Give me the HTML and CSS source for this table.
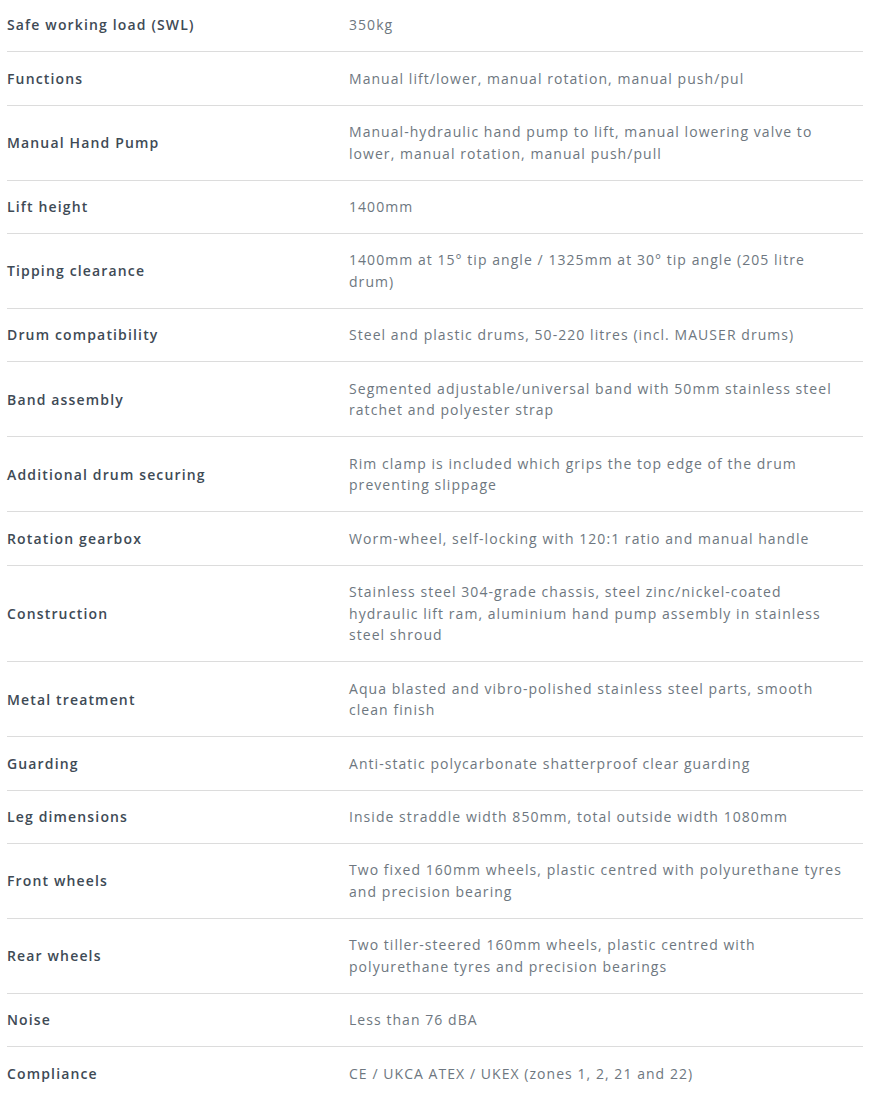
FILE: index.html
```html
<!DOCTYPE html>
<html lang="en">
<head>
<meta charset="utf-8">
<title>Specifications</title>
<link rel="stylesheet" href="styles.css">
</head>
<body>
<div class="specs">
  <div class="row"><div class="label">Safe working load (SWL)</div><div class="value">350kg</div></div>
  <div class="row"><div class="label">Functions</div><div class="value">Manual lift/lower, manual rotation, manual push/pul</div></div>
  <div class="row"><div class="label">Manual Hand Pump</div><div class="value">Manual-hydraulic hand pump to lift, manual lowering valve to lower, manual rotation, manual push/pull</div></div>
  <div class="row"><div class="label">Lift height</div><div class="value">1400mm</div></div>
  <div class="row"><div class="label">Tipping clearance</div><div class="value">1400mm at 15° tip angle / 1325mm at 30° tip angle (205 litre drum)</div></div>
  <div class="row"><div class="label">Drum compatibility</div><div class="value">Steel and plastic drums, 50-220 litres (incl. MAUSER drums)</div></div>
  <div class="row"><div class="label">Band assembly</div><div class="value">Segmented adjustable/universal band with 50mm stainless steel ratchet and polyester strap</div></div>
  <div class="row"><div class="label">Additional drum securing</div><div class="value">Rim clamp is included which grips the top edge of the drum preventing slippage</div></div>
  <div class="row"><div class="label">Rotation gearbox</div><div class="value">Worm-wheel, self-locking with 120:1 ratio and manual handle</div></div>
  <div class="row"><div class="label">Construction</div><div class="value">Stainless steel 304-grade chassis, steel zinc/nickel-coated hydraulic lift ram, aluminium hand pump assembly in stainless steel shroud</div></div>
  <div class="row"><div class="label">Metal treatment</div><div class="value">Aqua blasted and vibro-polished stainless steel parts, smooth clean finish</div></div>
  <div class="row"><div class="label">Guarding</div><div class="value">Anti-static polycarbonate shatterproof clear guarding</div></div>
  <div class="row"><div class="label">Leg dimensions</div><div class="value">Inside straddle width 850mm, total outside width 1080mm</div></div>
  <div class="row"><div class="label">Front wheels</div><div class="value">Two fixed 160mm wheels, plastic centred with polyurethane tyres and precision bearing</div></div>
  <div class="row"><div class="label">Rear wheels</div><div class="value">Two tiller-steered 160mm wheels, plastic centred with polyurethane tyres and precision bearings</div></div>
  <div class="row"><div class="label">Noise</div><div class="value">Less than 76 dBA</div></div>
  <div class="row"><div class="label">Compliance</div><div class="value">CE / UKCA ATEX / UKEX (zones 1, 2, 21 and 22)</div></div>
</div>
</body>
</html>
```
FILE: styles.css
```css
html, body {
  margin: 0;
  padding: 0;
  background: #ffffff;
}
body {
  font-family: "Open Sans", "Liberation Sans", sans-serif;
  font-size: 14px;
}
.specs {
  margin: -1px 6px 0 7px;
  display: flex;
  flex-direction: column;
}
.row {
  display: grid;
  grid-template-columns: 342px 1fr;
  align-items: center;
  padding: 15.4px 0;
  border-bottom: 1px solid #dcdcdc;
  line-height: 21.6px;
}
.label {
  color: #3e4a55;
  font-weight: 600;
  letter-spacing: 1.15px;
}
.value {
  color: #6e7780;
  font-weight: 400;
  letter-spacing: 1.05px;
  padding-right: 12px;
}
```
